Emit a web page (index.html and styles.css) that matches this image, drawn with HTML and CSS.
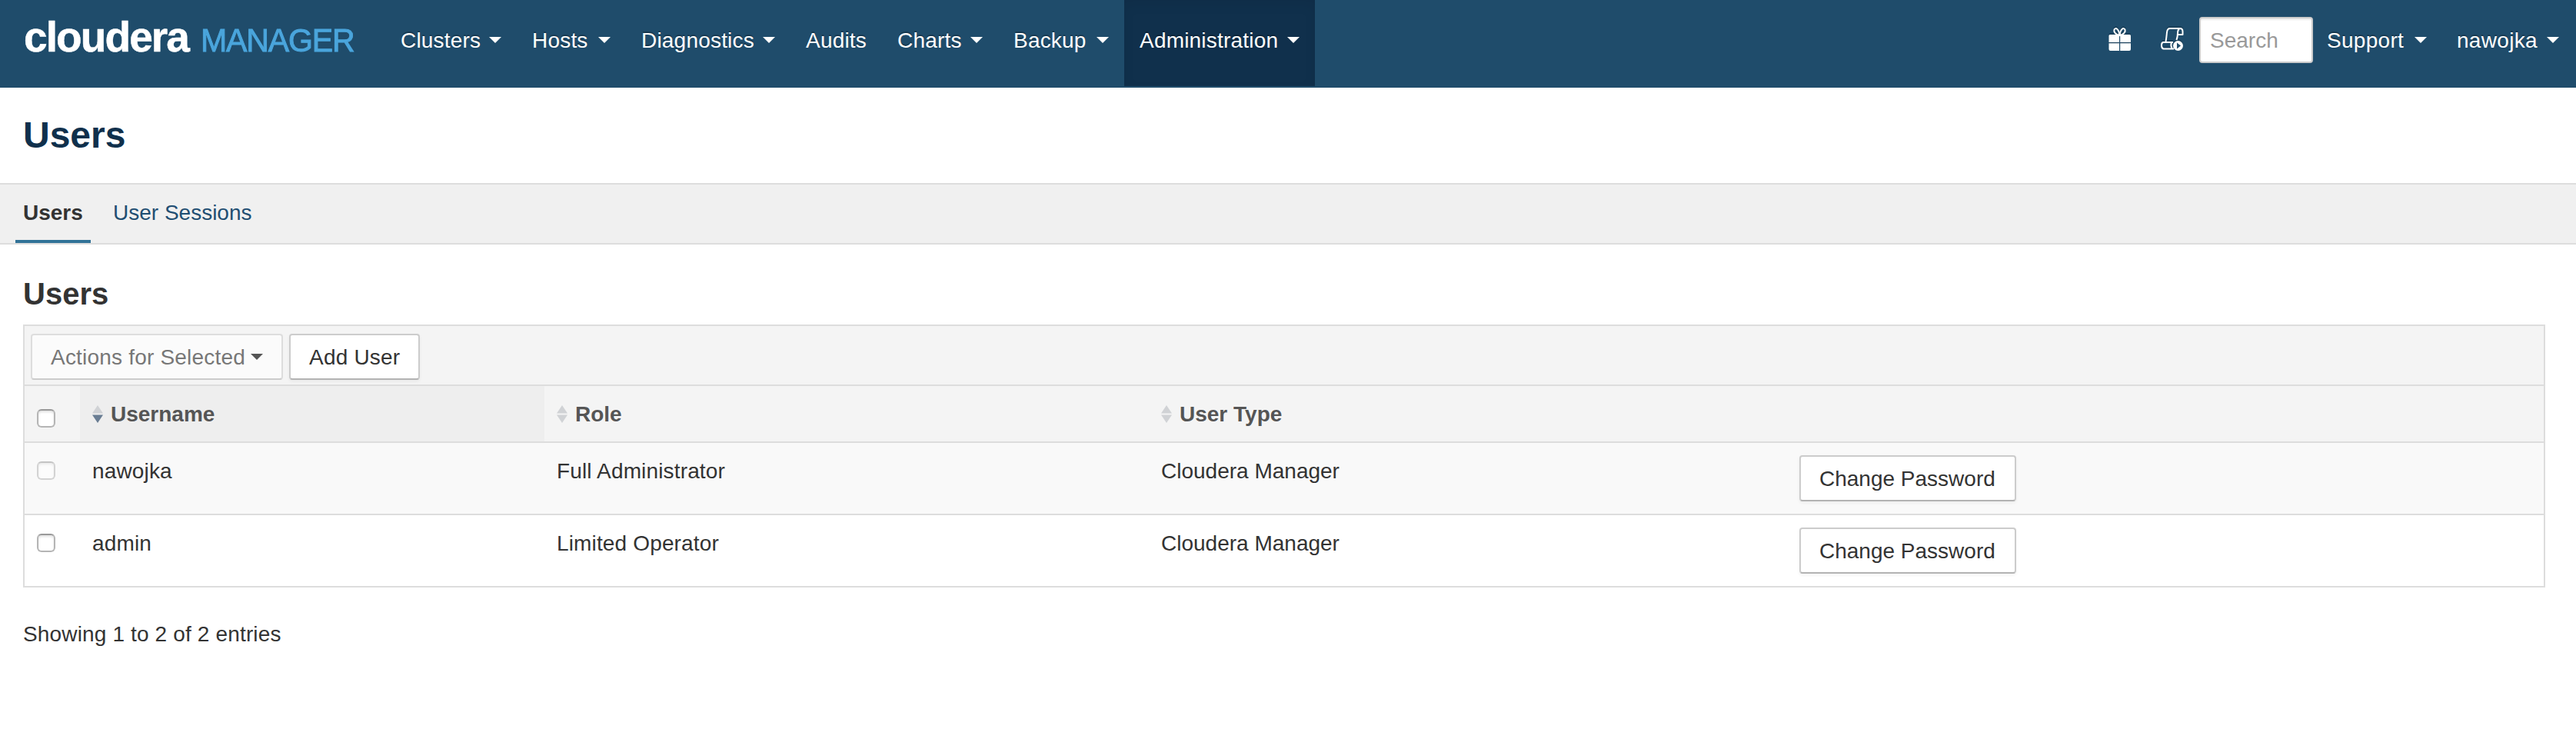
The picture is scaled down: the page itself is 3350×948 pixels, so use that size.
FILE: index.html
```html
<!DOCTYPE html>
<html lang="en">
<head>
<meta charset="utf-8">
<title>Users - Cloudera Manager</title>
<link rel="stylesheet" href="styles.css">
</head>
<body>
<header class="navbar">
  <a class="brand"><span class="brand-name">cloudera</span><span class="brand-product">MANAGER</span></a>
  <nav class="menu">
    <a class="menu-item w-clusters"><span>Clusters</span><i class="caret"></i></a>
    <a class="menu-item w-hosts"><span>Hosts</span><i class="caret"></i></a>
    <a class="menu-item w-diagnostics"><span>Diagnostics</span><i class="caret"></i></a>
    <a class="menu-item w-audits"><span>Audits</span></a>
    <a class="menu-item w-charts"><span>Charts</span><i class="caret"></i></a>
    <a class="menu-item w-backup"><span>Backup</span><i class="caret"></i></a>
    <a class="menu-item w-admin active"><span>Administration</span><i class="caret"></i></a>
  </nav>
  <div class="tools">
    <svg class="icon gift" viewBox="0 0 30 32">
      <g fill="none" stroke="#fff" stroke-width="2"><path d="M14.5 11C9 10 6.500 6 7.500 3.500C9 .5 13.500 2 14.500 11Z"/><path d="M14.500 11C20 10 22.500 6 21.500 3.500C20 .5 15.500 2 14.500 11Z"/></g>
      <path fill="#fff" d="M2 10H14V20H.5V11.500Q.5 10 2 10ZM15.200 10H27.500Q29 10 29 11.500V20H15.200ZM.5 21.200H14V31H2.500Q.5 31 .5 29ZM15.200 21.200H29V29Q29 31 27 31H15.200Z"/>
    </svg>
    <svg class="icon scroll" viewBox="0 0 30 32">
      <g fill="none" stroke="#fff" stroke-width="2" stroke-linejoin="round"><path d="M6.500 19C7.500 14 7.500 11 8 7Q8.500 2 12 2H25Q22 3 22 8C22 12 21.500 14 20.500 17"/><path d="M22 10H28.500V6Q28.500 2 25 2"/><path d="M16 20H3Q1 20.500 1 24Q1 28 3.500 28.500H17M14 20Q12.500 24 14.500 28"/></g>
      <circle cx="22.500" cy="24.500" r="6.500" fill="#fff"/><path d="M21 20.500L26 24.500L21 28.500Z" fill="#1f4c6b"/>
    </svg>
    <input class="search" type="text" placeholder="Search" aria-label="Search">
    <a class="tool-item support"><span>Support</span><i class="caret"></i></a>
    <a class="tool-item account"><span>nawojka</span><i class="caret"></i></a>
  </div>
</header>
<h1 class="page-title">Users</h1>
<div class="tabs"><a class="tab selected">Users</a><a class="tab">User Sessions</a></div>
<main class="content">
  <h2 class="section-title">Users</h2>
  <section class="panel">
    <div class="toolbar">
      <button class="btn actions" disabled><span>Actions for Selected</span><i class="caret"></i></button>
      <button class="btn add">Add User</button>
    </div>
    <div class="row head">
      <div class="cell check"><input type="checkbox" class="box" aria-label="Select all"></div>
      <div class="cell sorted"><svg class="sort" viewBox="0 0 14 23"><path fill="#d0d2d5" d="M7 0L14 10.500H0Z"/><path fill="#697d93" d="M0 12.500H14L7 23Z"/></svg><span>Username</span></div>
      <div class="cell"><svg class="sort" viewBox="0 0 14 23"><path fill="#d0d2d5" d="M7 0L14 10.500H0ZM0 12.500H14L7 23Z"/></svg><span>Role</span></div>
      <div class="cell"><svg class="sort" viewBox="0 0 14 23"><path fill="#d0d2d5" d="M7 0L14 10.500H0ZM0 12.500H14L7 23Z"/></svg><span>User Type</span></div>
      <div class="cell"></div>
    </div>
    <div class="row data odd">
      <div class="cell check"><input type="checkbox" class="box" disabled aria-label="Select nawojka"></div>
      <div class="cell">nawojka</div><div class="cell">Full Administrator</div><div class="cell type">Cloudera Manager</div>
      <div class="cell action"><button class="btn password">Change Password</button></div>
    </div>
    <div class="row data">
      <div class="cell check"><input type="checkbox" class="box" aria-label="Select admin"></div>
      <div class="cell">admin</div><div class="cell">Limited Operator</div><div class="cell type">Cloudera Manager</div>
      <div class="cell action"><button class="btn password">Change Password</button></div>
    </div>
  </section>
  <p class="summary">Showing 1 to 2 of 2 entries</p>
</main>
</body>
</html>
```
FILE: styles.css
```css
* { box-sizing: border-box; }
body { margin: 0; background: #fff; color: #333; font: 28px/40px "Liberation Sans", Arial, sans-serif; }

.navbar { display: flex; height: 114px; background: #1f4c6b; color: #fff; text-shadow: 0 -2px 0 rgba(0,0,0,.25); }
.brand { display: flex; align-items: baseline; width: 501px; padding: 18px 0 0 31px; line-height: 60px; text-shadow: none; white-space: nowrap; }
.brand-name { width: 230px; font-size: 55px; font-weight: bold; letter-spacing: -1.9px; -webkit-text-stroke: .5px #fff; }
.brand-product { font-size: 43px; letter-spacing: -1.2px; transform: scaleX(.955); transform-origin: left; color: #4aa5dc; -webkit-text-stroke: 1px #4aa5dc; }
.menu { display: flex; }
.menu-item { display: flex; justify-content: space-between; height: 112px; padding: 33px 20px 0; letter-spacing: .2px; white-space: nowrap; }
.w-clusters { width: 171px; }
.w-hosts { width: 142px; }
.w-diagnostics { width: 214px; }
.w-audits { width: 119px; }
.w-charts { width: 151px; }
.w-backup { width: 164px; }
.w-admin { width: 248px; }
.active { background: #10304c; box-shadow: inset 0 6px 16px rgba(0,0,0,.06); }
.caret { width: 0; height: 0; margin-top: 15px; border: 8px solid transparent; border-top-color: currentColor; border-bottom: 0; flex: none; }
.tools { display: flex; margin-left: auto; padding-right: 22px; }
.icon { width: 30px; height: 32px; margin-top: 35px; filter: drop-shadow(0 -2px 0 rgba(0,0,0,.15)); }
.gift { margin-right: 38px; }
.scroll { margin-right: 20px; }
.search { width: 148px; height: 60px; margin: 22px 18px 0 0; padding: 2px 12px 0; border: 2px solid #ccc; border-radius: 4px; background: #fff; box-shadow: inset 0 2px 2px rgba(0,0,0,.075); font: inherit; color: #333; }
.search::placeholder { color: #999; }
.tool-item { display: flex; justify-content: space-between; padding-top: 33px; letter-spacing: .3px; }
.support { width: 130px; margin-right: 39px; }
.account { width: 133px; }

.page-title { height: 124px; margin: 0; padding: 32px 30px 0; color: #10304c; font-size: 48px; line-height: 60px; }
.tabs { display: flex; height: 80px; padding-left: 20px; border: solid #ddd; border-width: 2px 0; background: #f0f0f0; }
.tab { padding: 17px 11px 0; margin-right: 18px; height: 76px; color: #1f4e72; }
.tab.selected { width: 98px; padding-left: 10px; border-bottom: 4px solid #317297; color: #333; font-weight: bold; }
.content { padding: 0 40px 0 30px; }
.section-title { height: 104px; margin: 0; padding: 39px 0 0; font-size: 40px; line-height: 50px; }

.panel { border: 2px solid #ddd; }
.toolbar { display: flex; gap: 8px; height: 78px; padding: 10px 8px; border-bottom: 2px solid #ddd; background: #f4f4f4; }
.btn { display: flex; justify-content: space-between; align-items: flex-start; height: 60px; padding: 9px 24px 0; border: 2px solid #ccc; border-bottom-color: #b3b3b3; border-radius: 4px; background: #fff; box-shadow: 0 2px 4px rgba(0,0,0,.05); color: #333; font: inherit; white-space: nowrap; }
.actions { width: 328px; letter-spacing: .2px; border-color: #ddd; border-bottom-color: #ccc; background: #fbfbfb; color: #777; box-shadow: none; }
.actions .caret { border-top-color: #555; }
.add { width: 170px; letter-spacing: .2px; }
.password { width: 282px; }
.row { display: grid; grid-template-columns: 72px 604px 786px 830px 1fr; border-bottom: 2px solid #ddd; }
.row:last-child { border-bottom: 0; }
.head { height: 74px; background: #f4f4f4; color: #555; font-weight: bold; }
.cell { padding: 17px 16px 0; letter-spacing: .15px; }
.type { letter-spacing: 0; }
.action { padding-top: 16px; letter-spacing: 0; }
.head .cell { display: flex; letter-spacing: 0; }
.sort { width: 14px; height: 23px; margin: 8px 10px 0 0; }
.sorted { background: #eee; }
.data { height: 94px; }
.data:last-child { height: 92px; }
.odd { background: #f9f9f9; }
.box { appearance: none; display: block; width: 24px; height: 24px; margin: 7px 0 0; border: 2px solid #b5b5b5; border-top-color: #999; border-radius: 6px; background: #fff; box-shadow: inset 0 2px 3px rgba(0,0,0,.12); }
.head .box { margin-top: 13px; }
.box:disabled { opacity: .55; }
.summary { margin: 0; padding-top: 41px; letter-spacing: .15px; }
```
